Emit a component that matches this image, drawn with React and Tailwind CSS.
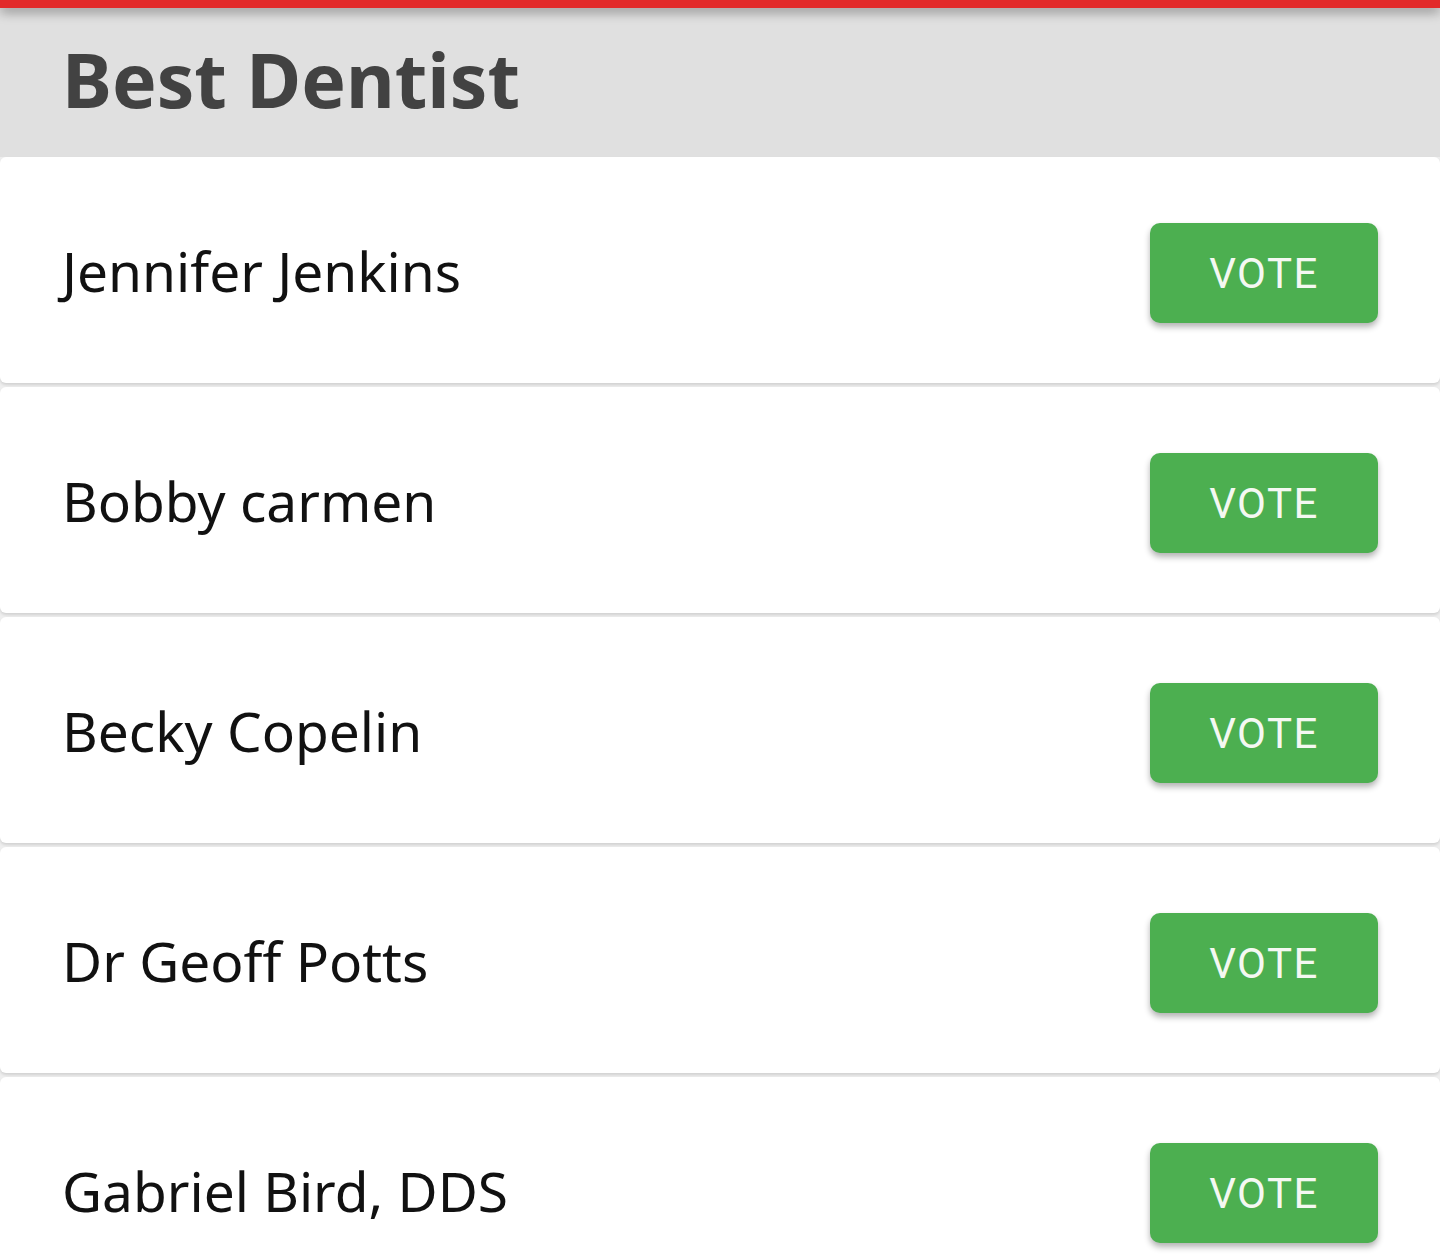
const candidates = [
  "Jennifer Jenkins",
  "Bobby carmen",
  "Becky Copelin",
  "Dr Geoff Potts",
  "Gabriel Bird, DDS",
];

function Candidate({ name }) {
  return (
    <div className="h-[226px] shrink-0 bg-white rounded-[6px] shadow-[0_2px_3px_rgba(0,0,0,0.12)] flex items-center justify-between pl-[62px] pr-[62px]">
      <span className="text-[55px] text-[#111111] font-['Noto_Sans',sans-serif] leading-none">
        {name}
      </span>
      <button className="w-[228px] h-[100px] mt-[6px] rounded-[10px] bg-[#4caf50] text-[#f4f8f2] text-[42px] font-normal tracking-[1.5px] font-['Roboto',sans-serif] shadow-[0_4px_6px_rgba(0,0,0,0.3)]">
        VOTE
      </button>
    </div>
  );
}

export default function App() {
  return (
    <div className="w-[1440px] h-[1259px] overflow-hidden bg-[#eeeeee] flex flex-col">
      <div className="h-[8px] shrink-0 bg-[#e22b2b] shadow-[0_4px_12px_rgba(0,0,0,0.4)] relative z-10" />
      <div className="h-[149px] shrink-0 bg-[#e0e0e0] flex items-center pl-[62px] pb-[6px]">
        <h1 className="text-[75px] font-bold text-[#424242] font-['Noto_Sans',sans-serif] leading-none">
          Best Dentist
        </h1>
      </div>
      <div className="flex flex-col gap-[4px]">
        {candidates.map((n) => (
          <Candidate key={n} name={n} />
        ))}
      </div>
    </div>
  );
}
